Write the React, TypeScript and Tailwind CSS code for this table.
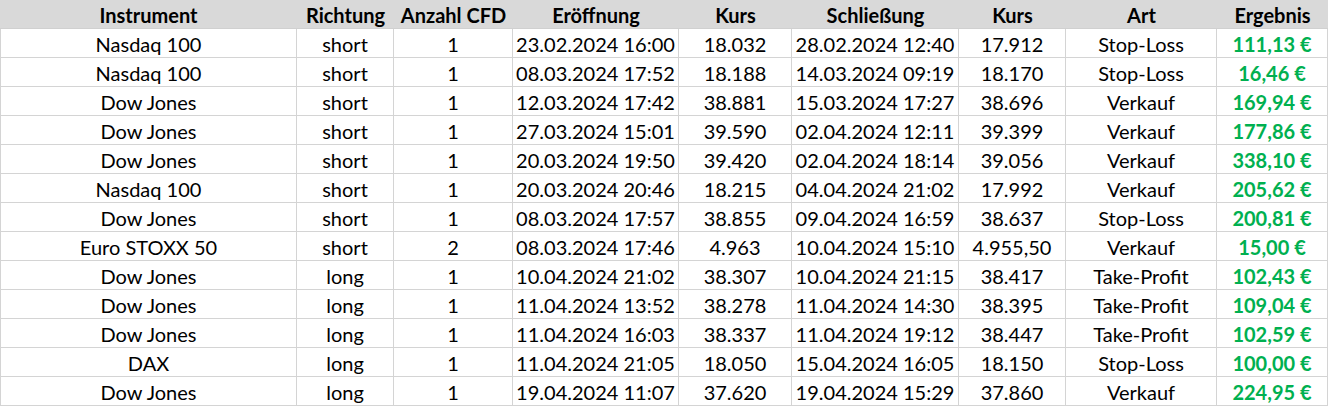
import React from 'react';

// Zeilen der Tabelle
const rows: string[][] = [
  ['Nasdaq 100', 'short', '1', '23.02.2024 16:00', '18.032', '28.02.2024 12:40', '17.912', 'Stop-Loss', '111,13 €'],
  ['Nasdaq 100', 'short', '1', '08.03.2024 17:52', '18.188', '14.03.2024 09:19', '18.170', 'Stop-Loss', '16,46 €'],
  ['Dow Jones', 'short', '1', '12.03.2024 17:42', '38.881', '15.03.2024 17:27', '38.696', 'Verkauf', '169,94 €'],
  ['Dow Jones', 'short', '1', '27.03.2024 15:01', '39.590', '02.04.2024 12:11', '39.399', 'Verkauf', '177,86 €'],
  ['Dow Jones', 'short', '1', '20.03.2024 19:50', '39.420', '02.04.2024 18:14', '39.056', 'Verkauf', '338,10 €'],
  ['Nasdaq 100', 'short', '1', '20.03.2024 20:46', '18.215', '04.04.2024 21:02', '17.992', 'Verkauf', '205,62 €'],
  ['Dow Jones', 'short', '1', '08.03.2024 17:57', '38.855', '09.04.2024 16:59', '38.637', 'Stop-Loss', '200,81 €'],
  ['Euro STOXX 50', 'short', '2', '08.03.2024 17:46', '4.963', '10.04.2024 15:10', '4.955,50', 'Verkauf', '15,00 €'],
  ['Dow Jones', 'long', '1', '10.04.2024 21:02', '38.307', '10.04.2024 21:15', '38.417', 'Take-Profit', '102,43 €'],
  ['Dow Jones', 'long', '1', '11.04.2024 13:52', '38.278', '11.04.2024 14:30', '38.395', 'Take-Profit', '109,04 €'],
  ['Dow Jones', 'long', '1', '11.04.2024 16:03', '38.337', '11.04.2024 19:12', '38.447', 'Take-Profit', '102,59 €'],
  ['DAX', 'long', '1', '11.04.2024 21:05', '18.050', '15.04.2024 16:05', '18.150', 'Stop-Loss', '100,00 €'],
  ['Dow Jones', 'long', '1', '19.04.2024 11:07', '37.620', '19.04.2024 15:29', '37.860', 'Verkauf', '224,95 €'],
];

const headers = ['Instrument', 'Richtung', 'Anzahl CFD', 'Eröffnung', 'Kurs', 'Schließung', 'Kurs', 'Art', 'Ergebnis'];

const gridCols = 'grid grid-cols-[297px_97px_119px_166px_113px_167px_107px_151px_111px]';

export default function App() {
  return (
    <div className="w-[1328px] h-[406px] overflow-hidden bg-white text-black text-[20px] font-['Lato','Liberation_Sans',sans-serif]">
      {/* Kopfzeile */}
      <div className={`${gridCols} h-[29px] bg-[#d9d9d9] border-b border-[#d0d0d0] font-bold`}>
        {headers.map((h, i) => (
          <div key={i} className="flex items-center justify-center leading-none pt-[1px]">
            {h}
          </div>
        ))}
      </div>

      {/* Datenzeilen */}
      {rows.map((r, ri) => (
        <div key={ri} className={`${gridCols} h-[29px] border-b border-[#d4d4d4]`}>
          {r.map((c, ci) => (
            <div
              key={ci}
              className={`flex items-center justify-center leading-none pt-[2px] border-r border-[#d4d4d4] ${
                ci === 0 ? 'border-l' : ''
              } ${ci === 8 ? 'text-[#00b050] font-bold' : ''}`}
            >
              {c}
            </div>
          ))}
        </div>
      ))}
    </div>
  );
}
